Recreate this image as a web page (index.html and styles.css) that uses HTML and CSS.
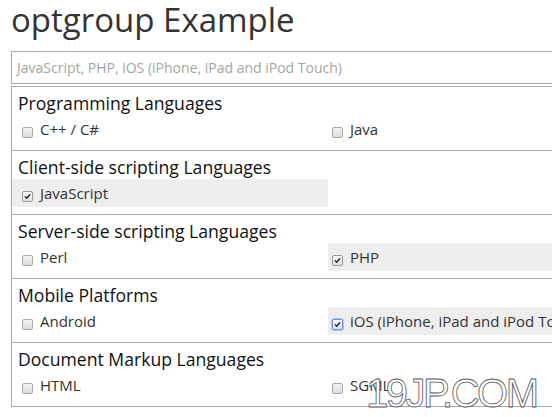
FILE: index.html
```html
<!DOCTYPE html>
<html>
<head>
<meta charset="utf-8">
<link rel="stylesheet" href="styles.css">
</head>
<body>
<div class="page">
  <h1 class="title">optgroup Example</h1>
  <div class="input">JavaScript, PHP, iOS (iPhone, iPad and iPod Touch)</div>
  <div class="list">
    <div class="group">
      <div class="group-label">Programming Languages</div>
      <div class="items">
        <div class="item left"><span class="box"></span>C++ / C#</div>
        <div class="item right"><span class="box"></span>Java</div>
      </div>
    </div>
    <div class="group">
      <div class="group-label">Client-side scripting Languages</div>
      <div class="items">
        <div class="item left selected"><span class="box checked"><svg viewBox="0 0 12 12" width="12" height="12"><path d="M3 6.2 L5 8.4 L9 3.6" fill="none" stroke="#222" stroke-width="1.8" stroke-linecap="round" stroke-linejoin="round"/></svg></span>JavaScript</div>
      </div>
    </div>
    <div class="group">
      <div class="group-label">Server-side scripting Languages</div>
      <div class="items">
        <div class="item left"><span class="box"></span>Perl</div>
        <div class="item right selected"><span class="box checked"><svg viewBox="0 0 12 12" width="12" height="12"><path d="M3 6.2 L5 8.4 L9 3.6" fill="none" stroke="#222" stroke-width="1.8" stroke-linecap="round" stroke-linejoin="round"/></svg></span>PHP</div>
      </div>
    </div>
    <div class="group">
      <div class="group-label">Mobile Platforms</div>
      <div class="items">
        <div class="item left"><span class="box"></span>Android</div>
        <div class="item right selected"><span class="box checked focused"><svg viewBox="0 0 12 12" width="12" height="12"><path d="M3 6.2 L5 8.4 L9 3.6" fill="none" stroke="#222" stroke-width="1.8" stroke-linecap="round" stroke-linejoin="round"/></svg></span>iOS (iPhone, iPad and iPod Touch)</div>
      </div>
    </div>
    <div class="group">
      <div class="group-label">Document Markup Languages</div>
      <div class="items">
        <div class="item left"><span class="box"></span>HTML</div>
        <div class="item right"><span class="box"></span>SGML</div>
      </div>
    </div>
  </div>
</div>
<div class="watermark">19JP.COM</div>
</body>
</html>
```
FILE: styles.css
```css
html, body {
  margin: 0;
  padding: 0;
  background: #fff;
  overflow: hidden;
}
body {
  font-family: "Open Sans", "Liberation Sans", sans-serif;
  width: 552px;
  height: 417px;
  position: relative;
}
.page {
  padding-left: 11px;
  width: 634px;
}
.title {
  margin: 0 0 11px 0;
  font-size: 33px;
  line-height: 40px;
  font-weight: 400;
  color: #333;
  white-space: nowrap;
}
.input {
  box-sizing: border-box;
  height: 33px;
  border: 1px solid #aaa;
  padding-left: 5px;
  font-size: 14px;
  line-height: 31px;
  color: #a5a5a5;
  white-space: nowrap;
  overflow: hidden;
  margin-bottom: 2px;
}
.list {
  border: 1px solid #aaa;
  border-top: none;
}
.group {
  border-top: 1px solid #aaa;
  padding: 4px 0 7px 0;
}
.group-label {
  font-size: 17.6px;
  line-height: 24px;
  padding-left: 6px;
  color: #111;
}
.items {
  display: flex;
}
.item {
  box-sizing: border-box;
  width: 316px;
  height: 28px;
  display: flex;
  align-items: center;
  font-size: 15px;
  color: #333;
  white-space: nowrap;
}
.item.left {
  padding-left: 10px;
}
.item.right {
  padding-left: 4px;
}
.items .item.right:first-child {
  margin-left: 316px;
}
.item.selected {
  background: #eee;
}
.box {
  box-sizing: border-box;
  width: 11px;
  height: 11px;
  border: 1px solid #a8a8a8;
  border-radius: 2px;
  background: linear-gradient(#f4f4f4, #dcdcdc);
  margin-right: 7px;
  margin-top: 7px;
  display: flex;
  align-items: center;
  justify-content: center;
  flex: none;
}
.box svg {
  display: block;
  width: 9px;
  height: 9px;
}
.box.checked {
  background: linear-gradient(#fafafa, #e2e2e2);
  border-color: #999;
}
.box.focused {
  border-color: #6d95d8;
  box-shadow: 0 0 0 1px #a9c3ee;
}
.watermark {
  position: absolute;
  left: 366px;
  top: 373px;
  font-family: "Liberation Sans", sans-serif;
  font-size: 40px;
  line-height: 40px;
  color: #fff;
  -webkit-text-stroke: 0.8px #555;
  letter-spacing: -2.5px;
}
```
